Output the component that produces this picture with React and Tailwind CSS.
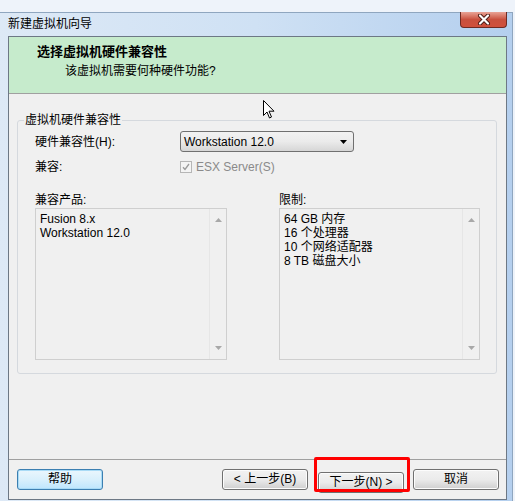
import React from 'react';

const font = { fontFamily: '"Liberation Sans", "Noto Sans CJK SC", sans-serif' };

function ListBox({ items, width }) {
  return (
    <div className={`flex h-[152px] border border-[#cfcfcf] bg-[#f0f0f0] ${width}`}>
      <div className="flex-1 pl-[4px] pt-[3px] leading-[14px] text-[12px] text-black">
        {items.map((t) => (
          <div key={t}>{t}</div>
        ))}
      </div>
      {/* 禁用状态的滚动条 */}
      <div className="w-[17px] border-l border-[#e6e6e6] bg-[#f0f0f0] flex flex-col items-center justify-between py-[9px]">
        <svg width="7" height="4" viewBox="0 0 7 4"><path d="M0 4 L3.5 0 L7 4Z" fill="#a8a8a8" /></svg>
        <svg width="7" height="4" viewBox="0 0 7 4"><path d="M0 0 L3.5 4 L7 0Z" fill="#a8a8a8" /></svg>
      </div>
    </div>
  );
}

function Btn({ children, focus }) {
  return (
    <button
      className={
        'w-[86px] h-[21px] rounded-[3px] border text-[12px] leading-[19px] text-black ' +
        (focus
          ? 'border-[#3c7fb1] bg-gradient-to-b from-[#eaf6fd] via-[#d9f0fc] to-[#bee6fd] shadow-[inset_0_0_0_1px_#a9dbf6]'
          : 'border-[#707070] bg-gradient-to-b from-[#f2f2f2] via-[#ebebeb] to-[#cfcfcf] shadow-[inset_0_0_0_1px_#fcfcfc]')
      }
    >
      {children}
    </button>
  );
}

export default function App() {
  return (
    <div className="relative w-[515px] h-[501px] overflow-hidden bg-[#eef3fa] flex flex-col" style={font}>
      <div className="h-[12px]" />
      <div className="flex-1 mr-[2px] flex flex-col pl-[8px] pr-[5px] pb-[1px] border-r border-t border-[#8fa6bf] bg-gradient-to-r from-[#dde9f6] via-[#cfe1f4] to-[#b4cfee]">
        {/* 标题栏 */}
        <div className="h-[23px] flex justify-between items-start">
          <span className="text-[12px] leading-[14px] mt-[4px] text-black">新建虚拟机向导</span>
          <div className="w-[47px] h-[16px] -mt-px rounded-b-[4px] border border-t-0 border-[#6f2a22] bg-gradient-to-b from-[#e8a396] via-[#c9503e] to-[#d0503c] flex items-center justify-center">
            <svg width="14" height="11" viewBox="0 0 14 11">
              <path d="M3 1.5 L11 9.5 M11 1.5 L3 9.5" stroke="#4a1a14" strokeWidth="4" strokeLinecap="round" />
              <path d="M3 1.5 L11 9.5 M11 1.5 L3 9.5" stroke="#ffffff" strokeWidth="2.2" strokeLinecap="round" />
            </svg>
          </div>
        </div>

        <div className="flex-1 flex flex-col border border-[#6d7885] bg-[#f0f0f0]">
          {/* 绿色页眉 */}
          <div className="h-[57px] bg-[#c6ebcc] border-b border-[#a0a0a0] pt-[7px]">
            <div className="pl-[28px] text-[13px] leading-[16px] font-bold text-black">选择虚拟机硬件兼容性</div>
            <div className="pl-[56px] mt-[4px] text-[12px] leading-[14px] text-black">该虚拟机需要何种硬件功能?</div>
          </div>

          <div className="flex-1 flex flex-col">
            <fieldset className="mt-[19px] ml-[8px] mr-[9px] border border-[#d5d9de] rounded-[3px] p-0">
              <legend className="ml-[6px] px-[1px] text-[12px] leading-[14px] text-black">虚拟机硬件兼容性</legend>

              <div className="pl-[17px] pr-[15px] pb-[13px] pt-[4px]">
                <div className="flex items-center h-[21px] text-[12px]">
                  <span className="w-[145px]">硬件兼容性(H):</span>
                  <div className="w-[174px] h-[21px] rounded-[3px] border border-[#707070] bg-gradient-to-b from-[#f2f2f2] via-[#ebebeb] to-[#d6d6d6] flex items-center justify-between pl-[3px] pr-[6px]">
                    <span className="leading-[14px]">Workstation 12.0</span>
                    <svg width="7" height="4" viewBox="0 0 7 4"><path d="M0 0 L7 0 L3.5 4Z" fill="#000" /></svg>
                  </div>
                </div>

                <div className="flex items-center h-[18px] mt-[6px] text-[12px]">
                  <span className="w-[145px]">兼容:</span>
                  <div className="w-[12px] h-[12px] border border-[#b6b6b6] bg-[#f4f4f4] flex items-center justify-center">
                    <svg width="8" height="8" viewBox="0 0 8 8"><path d="M1 4.2 L3 6.5 L7 1" stroke="#9a9a9a" strokeWidth="1.3" fill="none" /></svg>
                  </div>
                  <span className="ml-[4px] text-[#8a8a8a]">ESX Server(S)</span>
                </div>

                <div className="flex gap-[52px] mt-[17px] text-[12px]">
                  <div className="flex flex-col">
                    <span className="leading-[14px] mb-[1px]">兼容产品:</span>
                    <ListBox width="w-[192px]" items={['Fusion 8.x', 'Workstation 12.0']} />
                  </div>
                  <div className="flex flex-col">
                    <span className="leading-[14px] mb-[1px]">限制:</span>
                    <ListBox width="w-[201px]" items={['64 GB 内存', '16 个处理器', '10 个网络适配器', '8 TB 磁盘大小']} />
                  </div>
                </div>
              </div>
            </fieldset>

            <div className="flex-1" />

            {/* 底部按钮 */}
            <div className="h-[40px] border-t border-[#a0a0a0] flex items-start justify-between pt-[9px] pl-[8px] pr-[7px]">
              <Btn focus>帮助</Btn>
              <div className="flex">
                <Btn>&lt; 上一步(B)</Btn>
                <div className="relative ml-[10px] mr-[9px]">
                  <Btn>下一步(N) &gt;</Btn>
                  <div className="absolute -left-[4px] -top-[12px] w-[96px] h-[35px] border-[3px] border-[#ff0000] rounded-[2px] pointer-events-none" />
                </div>
                <Btn>取消</Btn>
              </div>
            </div>
          </div>
        </div>
      </div>

      {/* 鼠标指针 */}
      <svg className="absolute left-[263px] top-[100px]" width="12" height="19" viewBox="0 0 12 19">
        <path d="M0.5 0.5 L0.5 15.5 L4 12 L6.5 18 L8.5 17 L6 11.2 L11 11.2 Z" fill="#fff" stroke="#000" strokeWidth="1" strokeLinejoin="round" />
      </svg>
    </div>
  );
}
